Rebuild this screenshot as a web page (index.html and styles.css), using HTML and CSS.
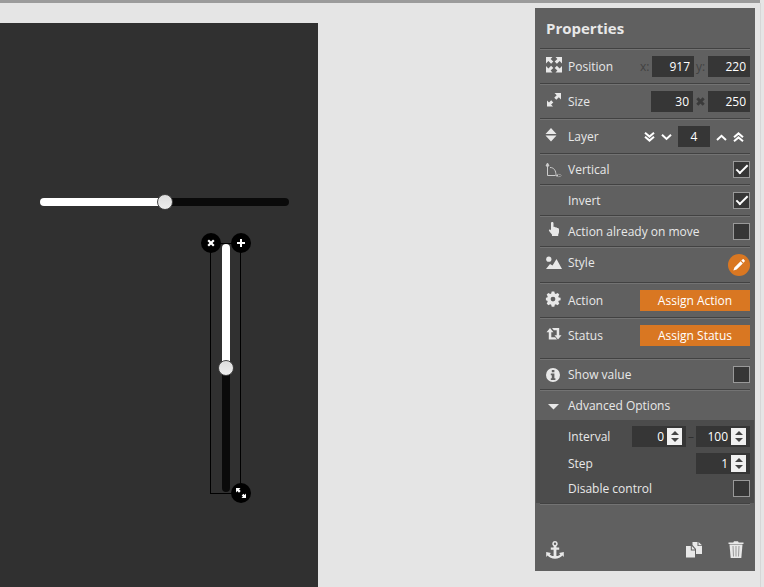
FILE: index.html
```html
<!DOCTYPE html>
<html lang="en">
<head>
  <meta charset="UTF-8">
  <meta name="viewport" content="width=device-width, initial-scale=1.0">
  <title>Editor</title>
  <link rel="stylesheet" href="styles.css">
</head>
<body>
  <div class="topbar"></div>
  <div class="editor">
    <main class="workspace">
      <div class="canvas">
        <input type="range" class="slider slider-horizontal" aria-label="Horizontal slider" value="50">
        <div class="selection">
          <input type="range" class="slider slider-vertical" aria-label="Vertical slider" value="50">
          <button class="handle handle-remove" aria-label="Remove">
            <svg width="8" height="8" viewBox="0 0 8 8"><path d="M1.2 1.2l5.6 5.6M6.8 1.2L1.2 6.8" stroke="#fff" stroke-width="2.2"/></svg>
          </button>
          <button class="handle handle-add" aria-label="Add">
            <svg width="10" height="10" viewBox="0 0 10 10"><path d="M5 1v8M1 5h8" stroke="#fff" stroke-width="2"/></svg>
          </button>
          <button class="handle handle-resize" aria-label="Resize">
            <svg width="12" height="12" viewBox="0 0 12 12" fill="#fff"><path d="M1 1h4.500L4.100 2.400l1.600 1.600L4 5.700 2.400 4.100 1 5.500zM11 11H6.500l1.400-1.400-1.200-1.200 1.700-1.700 1.200 1.200L11 6.500z"/></svg>
          </button>
        </div>
      </div>
    </main>

    <aside class="panel">
      <h2>Properties</h2>

      <div class="row row-tall">
        <svg class="icon" viewBox="0 0 16 16"><path d="M0 0h6.500L4.600 1.900l2.700 2.700-2.200 2.200-2.700-2.700L0 6.500zM16 0v6.500l-2.400-2.400-2.700 2.700-2.200-2.200 2.700-2.700L9.500 0zM0 15.500V9l2.400 2.400 2.700-2.700 2.200 2.200-2.700 2.700 1.900 1.900zM16 15.500H9.500l1.900-1.900-2.700-2.700 2.200-2.200 2.700 2.700L16 9z"/></svg>
        <span class="label">Position</span>
        <div class="fields">
          <label class="dim" for="posX">x:</label>
          <input type="text" class="field" id="posX" value="917">
          <label class="dim" for="posY">y:</label>
          <input type="text" class="field" id="posY" value="220">
        </div>
      </div>

      <div class="row row-tall">
        <svg class="icon" viewBox="0 0 16 16"><path d="M8.500 1H15v6.500l-2.200-2.200-2.500 2.500-2.100-2.100 2.500-2.500zM1 14.500V8.500l2 2 2.200-2.200 2.100 2.100-2.200 2.200L7 14.500z"/></svg>
        <span class="label">Size</span>
        <div class="fields">
          <input type="text" class="field" aria-label="Width" value="30">
          <svg class="times" viewBox="0 0 9 9"><path d="M1.300 1.300l6.400 6.400M7.700 1.300L1.300 7.700"/></svg>
          <input type="text" class="field" aria-label="Height" value="250">
        </div>
      </div>

      <div class="row row-tall">
        <svg class="icon" viewBox="0 0 16 16"><path d="M5 1l5.500 6h-11zM-.5 8.500h11L5 14.500z"/></svg>
        <label class="label" for="layer">Layer</label>
        <div class="fields layers">
          <button class="arrow" aria-label="To bottom"><svg viewBox="0 0 11 10"><path d="M1 .8l4.500 3.800L10 .8M1 4.800l4.500 3.800L10 4.800"/></svg></button>
          <button class="arrow" aria-label="Down"><svg viewBox="0 0 11 10"><path d="M1 2.800l4.500 4.200L10 2.800"/></svg></button>
          <input type="text" class="field field-layer" id="layer" value="4">
          <button class="arrow" aria-label="Up"><svg viewBox="0 0 11 10"><path d="M1 8l4.500-4.200L10 8"/></svg></button>
          <button class="arrow" aria-label="To top"><svg viewBox="0 0 11 10"><path d="M1 5.200l4.500-3.800L10 5.200M1 9.200l4.500-3.800L10 9.200"/></svg></button>
        </div>
      </div>

      <div class="row">
        <svg class="icon icon-line" viewBox="0 0 16 16"><path d="M1.500 2v11.500H12M4 5.500c4 0 6 3 6 8"/><path d="M0 4l1.500-3L3 4z" fill="#ccc"/><ellipse cx="12.500" cy="13.500" rx="2.800" ry="1.200" stroke="#999"/></svg>
        <label class="label" for="vertical">Vertical</label>
        <input type="checkbox" id="vertical" checked>
      </div>

      <div class="row">
        <span class="icon"></span>
        <label class="label" for="invert">Invert</label>
        <input type="checkbox" id="invert" checked>
      </div>

      <div class="row">
        <svg class="icon" viewBox="0 0 16 16"><path d="M5 1.200C5 .4 5.500 0 6.200 0S7.500.4 7.500 1.200V5c.8-.4 1.500-.1 1.800.4.800-.3 1.500 0 1.800.6 1-.2 1.900.3 1.900 1.500v2.200c0 1.300-.6 2-.9 3.300H6.200C5.500 11.500 4 10.500 3 8.800c-.4-.8.600-1.700 1.400-1.100l.6.5zM6 12h6.200v2H6z"/></svg>
        <label class="label" for="onMove">Action already on move</label>
        <input type="checkbox" id="onMove">
      </div>

      <div class="row row-style">
        <svg class="icon" viewBox="0 0 16 16"><circle cx="2.800" cy="4.200" r="2.600"/><path d="M0 14l4-5 2.500 1.500L10.500 4 16 14z"/></svg>
        <span class="label">Style</span>
        <button class="edit" aria-label="Edit style">
          <svg width="12" height="12" viewBox="0 0 12 12" fill="#fff"><path d="M8.300 1.500L9.500.4c.4-.4.9-.4 1.300 0l.8.8c.4.4.4.9 0 1.300l-1.100 1.200zM7.600 2.200l2.200 2.200-6.200 6.200L.4 11.600l1-3.200z"/></svg>
        </button>
      </div>

      <div class="row row-tall">
        <svg class="icon" viewBox="0 0 16 16"><path fill-rule="evenodd" d="M5.700.500h2.600l.5 2 1 .4 1.800-1 1.700 1.700-1 1.800.4 1 1.900.4v2.500l-1.900.5-.4 1 1 1.800-1.700 1.700-1.800-1-1 .4-.5 2H5.700l-.5-2-1-.4-1.800 1L.7 12.600l1-1.800-.4-1L-.1 9.300V6.800l1.400-.4.4-1-1-1.800 1.700-1.700 1.800 1 1-.4zM7 5.700a2.400 2.400 0 1 0 0 4.800 2.400 2.400 0 0 0 0-4.800z"/></svg>
        <span class="label">Action</span>
        <button class="assign">Assign Action</button>
      </div>

      <div class="row row-status">
        <svg class="icon" viewBox="0 0 16 16"><path d="M4 2l3.500 4.300H5.300v4.900h3.900l1.800 2.300H2.800V6.300H.5zM6 2h7.200v7.200h2.300L12 13.500 8.500 9.200h2.200V4.300H7.800z"/></svg>
        <span class="label">Status</span>
        <button class="assign">Assign Status</button>
      </div>

      <div class="row">
        <svg class="icon icon-info" viewBox="0 0 16 16"><path fill-rule="evenodd" d="M7 1a7 7 0 1 0 0 14A7 7 0 0 0 7 1zM5.800 3h2.600v2.300H5.800zM4.800 6.500h3.600v4.700h1V13H4.800v-1.800h1V8.300h-1z"/></svg>
        <label class="label" for="showValue">Show value</label>
        <input type="checkbox" id="showValue">
      </div>

      <div class="row">
        <svg class="icon icon-info" viewBox="0 0 16 16"><path d="M2 6h11l-5.500 5.500z"/></svg>
        <span class="label">Advanced Options</span>
      </div>

      <div class="advanced">
        <div class="option">
          <label class="label" for="min">Interval</label>
          <div class="fields">
            <div class="number">
              <input type="text" id="min" value="0">
              <div class="spin">
                <button aria-label="Increase"></button>
                <button class="down" aria-label="Decrease"></button>
              </div>
            </div>
            <span class="dash">–</span>
            <div class="number">
              <input type="text" aria-label="Interval end" value="100">
              <div class="spin">
                <button aria-label="Increase"></button>
                <button class="down" aria-label="Decrease"></button>
              </div>
            </div>
          </div>
        </div>
        <div class="option">
          <label class="label" for="step">Step</label>
          <div class="number">
            <input type="text" id="step" value="1">
            <div class="spin">
              <button aria-label="Increase"></button>
              <button class="down" aria-label="Decrease"></button>
            </div>
          </div>
        </div>
        <div class="option">
          <label class="label" for="disable">Disable control</label>
          <input type="checkbox" id="disable">
        </div>
      </div>

      <div class="footer">
        <button class="tool tool-anchor" aria-label="Anchor">
          <svg width="18" height="18" viewBox="0 0 18 18"><path fill-rule="evenodd" d="M9 0a2.800 2.800 0 0 1 1.400 5.200V6.500h2.800v2.300h-2.800v6.300c1.900-.2 3.200-.9 3.900-1.900l-1.300-1.300 4.800-.9v4.900l-1.400-1.300C14.900 16.600 12.200 17.800 9 17.800s-5.900-1.200-7.400-3.200L.2 15.900V11l4.800.9-1.300 1.300c.7 1 2 1.700 3.900 1.900V8.800H4.800V6.500h2.800V5.200A2.800 2.800 0 0 1 9 0zm0 1.600a1.200 1.200 0 1 0 0 2.400 1.200 1.200 0 0 0 0-2.400z"/></svg>
        </button>
        <button class="tool" aria-label="Duplicate">
          <svg width="16" height="18" viewBox="0 0 16 18"><path d="M0 5h4.800v4.500H9V16.500H0zM5.800 5L9 8.500H5.800zM6.500 4V1h5v4H16v8H10V8z"/><path d="M12.500 1L16 4.200h-3.500z"/></svg>
        </button>
        <button class="tool tool-trash" aria-label="Delete">
          <svg width="16" height="18" viewBox="0 0 16 18"><path d="M.5 1.500h4.800L6 .3h4l.7 1.200h4.800V3H.5z"/><path d="M1.500 3.600h13L13.300 17H2.700z"/><path d="M5 5l.5 10.500M8 5v10.500M11 5l-.5 10.500" stroke="#999" fill="none"/></svg>
        </button>
      </div>
    </aside>
  </div>
</body>
</html>
```

FILE: styles.css
```css
*, *::before {
  box-sizing: border-box;
}
body {
  margin: 0;
  min-height: 100vh;
  display: flex;
  flex-direction: column;
  background: #e5e5e5;
  color: #e8e8e8;
  font-family: "Open Sans", sans-serif;
  font-size: 12px;
  line-height: 16px;
}
button {
  padding: 0;
  border: 0;
  background: none;
  color: inherit;
  font: inherit;
  cursor: pointer;
}
svg {
  display: block;
  overflow: visible;
}
.topbar {
  height: 3px;
  margin-right: 4px;
  background: #9b9b9b;
}
.editor {
  flex: 1;
  display: flex;
  align-items: flex-start;
  margin-right: 3px;
  padding-right: 5px;
  border-right: 1px solid #d6d6d6;
}

/* canvas */
.workspace {
  flex: 1;
  align-self: stretch;
  display: flex;
  padding-top: 20px;
}
.canvas {
  position: relative;
  width: 318px;
  background: #303030;
}
.slider {
  -webkit-appearance: none;
  appearance: none;
  margin: 0;
  background: none;
}
.slider-horizontal {
  position: absolute;
  left: 40px;
  top: 171px;
  width: 249px;
  height: 16px;
}
.slider::-webkit-slider-runnable-track {
  border-radius: 4px;
}
.slider-horizontal::-webkit-slider-runnable-track {
  height: 8px;
  background: linear-gradient(to right, #fff 50%, #0a0a0a 50%);
}
.slider-vertical::-webkit-slider-runnable-track {
  width: 8px;
  background: linear-gradient(to bottom, #fff 50%, #0a0a0a 50%);
}
.slider::-webkit-slider-thumb {
  -webkit-appearance: none;
  width: 16px;
  height: 16px;
  border: 1px solid #444;
  border-radius: 50%;
  background: linear-gradient(#ddd, #eee);
}
.slider-horizontal::-webkit-slider-thumb {
  margin-top: -4px;
}
.slider-vertical::-webkit-slider-thumb {
  margin-left: -4px;
}
.selection {
  position: absolute;
  left: 210px;
  top: 220px;
  width: 31px;
  height: 251px;
  border: 1px solid #000;
}
.slider-vertical {
  writing-mode: vertical-lr;
  display: block;
  width: 16px;
  height: 248px;
  margin: 0 7px;
}
.handle {
  position: absolute;
  width: 20px;
  height: 20px;
  display: flex;
  align-items: center;
  justify-content: center;
  border-radius: 50%;
  background: #000;
}
.handle-remove {
  left: -10px;
  top: -11px;
}
.handle-add {
  right: -11px;
  top: -11px;
}
.handle-resize {
  right: -11px;
  bottom: -10px;
}

/* properties panel */
.panel {
  width: 220px;
  margin-top: 5px;
  background: #606060;
}
.panel h2 {
  height: 40px;
  margin: 0;
  padding-left: 11px;
  font-size: 15px;
  line-height: 40px;
}
.row {
  display: flex;
  align-items: center;
  height: 31px;
  margin: 0 5px;
  padding: 1px 0 0 6px;
  border-top: 1px solid #424242;
  box-shadow: inset 0 1px #737373;
}
.row-tall {
  height: 35px;
}
.row-style {
  height: 36px;
}
.row-style .label {
  padding-bottom: 4px;
}
.row-status {
  height: 41px;
  padding-bottom: 6px;
}
.icon {
  width: 16px;
  height: 16px;
  margin-right: 6px;
  margin-bottom: 4px;
  fill: #e8e8e8;
}
.icon-info {
  margin-bottom: 0;
}
.icon-line {
  margin-bottom: 0;
  fill: none;
  stroke: #ccc;
}
.label {
  flex: 1;
}
.fields {
  display: flex;
  align-items: center;
}
.field {
  width: 42px;
  height: 21px;
  padding: 0 4px;
  border: 0;
  background: #363636;
  color: #fff;
  font: inherit;
  text-align: right;
}
.dim {
  width: 14px;
  padding-left: 2px;
  color: #424242;
}
.times {
  width: 9px;
  height: 9px;
  margin: 0 3px;
  stroke: #3a3a3a;
  stroke-width: 3;
}
.field-layer {
  width: 32px;
  text-align: center;
}
.layers {
  gap: 6px;
  padding-right: 6px;
}
.arrow svg {
  width: 11px;
  height: 10px;
  fill: none;
  stroke: #fff;
  stroke-width: 2;
}
input[type="checkbox"] {
  -webkit-appearance: none;
  appearance: none;
  width: 17px;
  height: 17px;
  margin: 0;
  border: 1px solid #999;
  background: #363636;
}
input[type="checkbox"]:checked::before {
  content: "";
  display: block;
  width: 12px;
  height: 6px;
  margin: 3px 2px;
  border-left: 2px solid #fff;
  border-bottom: 2px solid #fff;
  transform: rotate(-45deg);
}
.edit {
  width: 22px;
  height: 22px;
  display: flex;
  align-items: center;
  justify-content: center;
  border-radius: 50%;
  background: #d97722;
}
.assign {
  width: 110px;
  height: 21px;
  background: #d97722;
  color: #fff;
}
.advanced {
  display: grid;
  gap: 6px;
  margin: 0 1px;
  padding: 6px 4px 6px 32px;
  background: #4c4c4c;
}
.option {
  display: flex;
  align-items: center;
}
.number {
  display: flex;
  align-items: center;
  width: 54px;
  height: 21px;
  padding-right: 4px;
  background: #363636;
}
.number input {
  flex: 1;
  min-width: 0;
  padding: 0 3px;
  border: 0;
  background: none;
  color: #fff;
  font: inherit;
  text-align: right;
}
.spin {
  display: flex;
  flex-direction: column;
  align-items: center;
  justify-content: center;
  gap: 3px;
  width: 15px;
  height: 17px;
  background: #f0f0f0;
}
.spin button {
  border: 4px solid transparent;
  border-top: 0;
  border-bottom-color: #444;
}
.spin .down {
  border-top: 4px solid #444;
  border-bottom: 0;
}
.dash {
  width: 10px;
  color: #303030;
  text-align: center;
}
.footer {
  display: flex;
  align-items: center;
  gap: 26px;
  height: 68px;
  margin: 0 5px;
  padding: 24px 6px 0;
  border-top: 1px solid #424242;
  box-shadow: inset 0 1px #737373;
}
.tool {
  fill: #e8e8e8;
}
.tool-anchor {
  margin-right: auto;
}
```
